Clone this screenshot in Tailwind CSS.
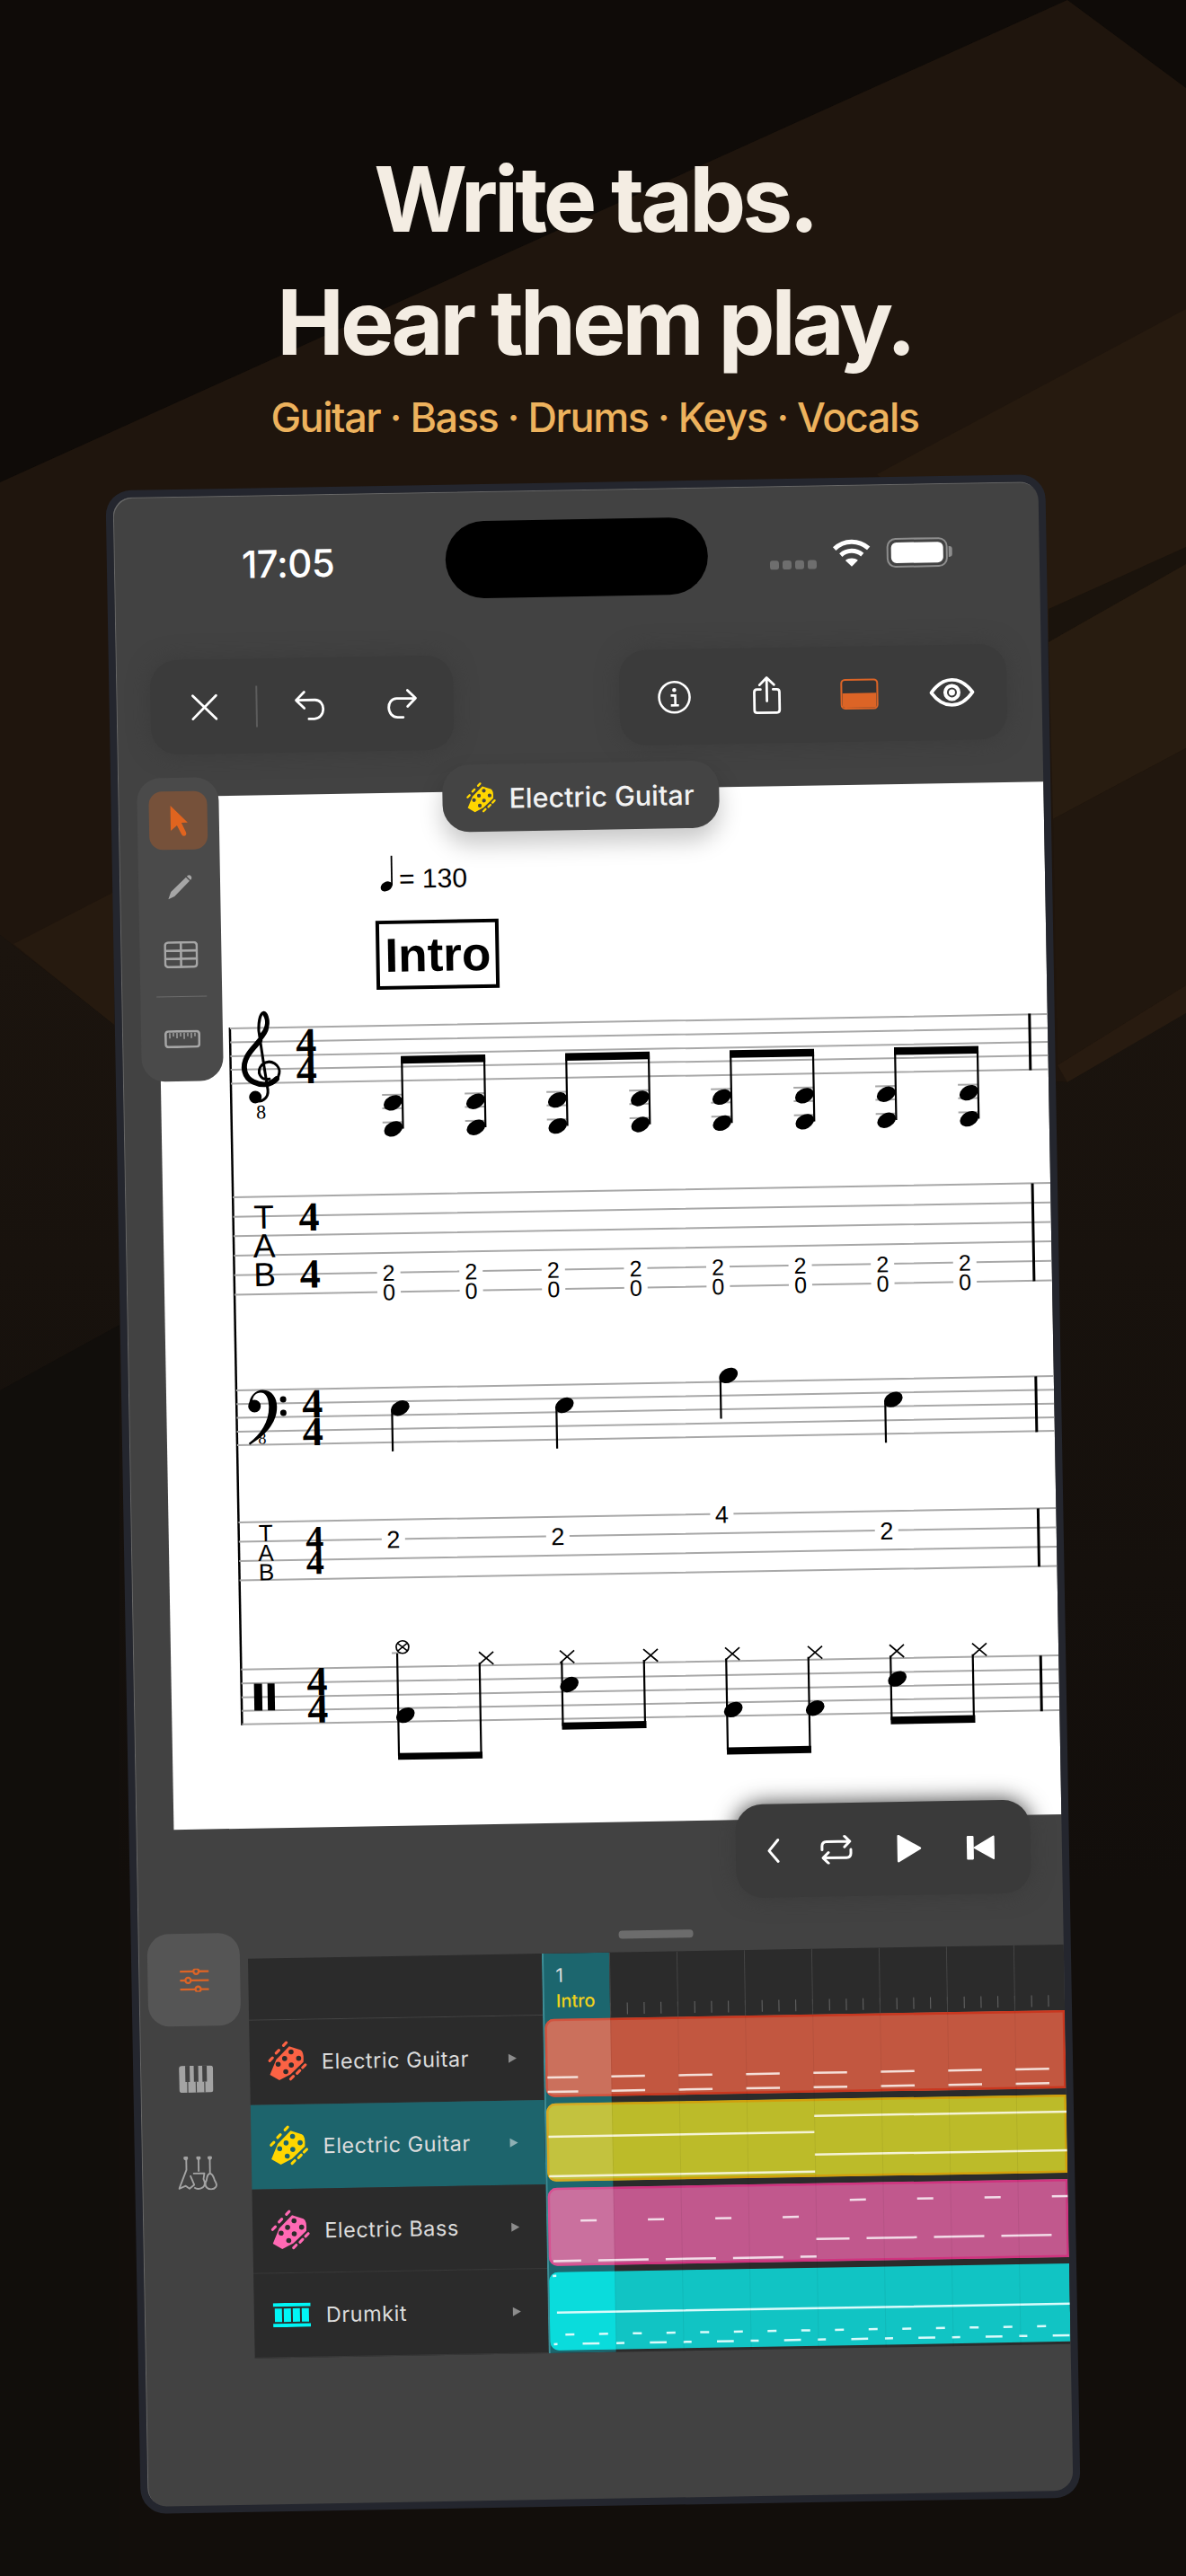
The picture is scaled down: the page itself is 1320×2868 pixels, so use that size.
<!DOCTYPE html>
<html lang="en">
<head>
<meta charset="UTF-8">
<title>Write tabs. Hear them play.</title>
<script src="https://cdn.jsdelivr.net/npm/@tailwindcss/browser@4"></script>
</head>
<body class="relative w-[1320px] h-[2868px] overflow-hidden bg-[#110e0b] [font-family:Inter,sans-serif]">

<!-- background shards -->
<svg class="absolute inset-0" width="1320" height="2868" viewBox="0 0 1320 2868">
  <defs>
    <linearGradient id="low" x1="0" y1="1050" x2="0" y2="2100" gradientUnits="userSpaceOnUse">
      <stop offset="0" stop-color="#1b140e"/>
      <stop offset="1" stop-color="#120e0b"/>
    </linearGradient>
  </defs>
  <path d="M0 0H1320V98L1188 0L0 537Z" fill="#0f0b08"/>
  <path d="M0 537L1188 0L1320 98V1130L1188 1205L127 1141L0 1041Z" fill="#1f150d"/>
  <path d="M1320 344L976 528L1170 715L1320 626Z" fill="#261a0f"/>
  <path d="M1167 678L1320 609V628L1167 715Z" fill="#1a130c"/>
  <path d="M1167 715L1320 628V833L1172 912Z" fill="#281c10"/>
  <path d="M1172 912L1320 833V1097L1177 1186Z" fill="#21170e"/>
  <path d="M1177 1186L1320 1097V1128L1188 1205Z" fill="#281b10"/>
  <path d="M15 1051L127 993V1141Z" fill="#261a0f"/>
  <path d="M0 1041L127 1141L1188 1205L1320 1128V2868H0Z" fill="url(#low)"/>
  <path d="M0 1548L133 1475V2868H0Z" fill="#110e0b"/>
</svg>

<!-- reusable icons -->
<svg class="hidden">
  <symbol id="headstock" viewBox="-24 -24 48 48">
    <path fill-rule="evenodd" fill="currentColor" d="M2-17L14-13Q18-11 17 0L3 13L-9 19L-19 13L-12-3ZM6.700-11a2.700 2.700 0 1 0-5.400 0a2.700 2.700 0 1 0 5.400 0ZM14.700-4a2.700 2.700 0 1 0-5.400 0a2.700 2.700 0 1 0 5.400 0ZM-.300-4a2.700 2.700 0 1 0-5.400 0a2.700 2.700 0 1 0 5.400 0ZM6.700 3a2.700 2.700 0 1 0-5.400 0a2.700 2.700 0 1 0 5.400 0ZM-7.300 2a2.700 2.700 0 1 0-5.400 0a2.700 2.700 0 1 0 5.400 0ZM.7 10a2.700 2.700 0 1 0-5.400 0a2.700 2.700 0 1 0 5.400 0Z"/>
    <path stroke="currentColor" stroke-width="3" stroke-linecap="round" d="M-19-2L-16-5M-12-10L-9-13M-4-18L-1-21M16 6L19 3M10 12L13 9M3 18L6 15"/>
  </symbol>
</svg>

<header class="relative pl-[4px] pt-[153px] text-center">
  <h1 class="text-[100px] leading-[137px] font-bold tracking-[-4px] text-[#f4ede3]">Write tabs.<br>Hear them play.</h1>
  <p class="mt-[8px] text-[45px] leading-[60px] font-medium tracking-[-1.450px] text-[#edb25d]">Guitar · Bass · Drums · Keys · Vocals</p>
</header>

<!-- device -->
<div class="relative mx-auto mt-[42px] w-[1046px] h-[2253px] -rotate-1 rounded-[28px] bg-[#24262e] p-2">
  <div class="relative h-full overflow-hidden rounded-[21px] bg-[#424242] shadow-[inset_1px_1px_0_#676767]">

    <!-- status bar -->
    <div class="mt-[33px] grid h-[86px] grid-cols-[369px_292px_1fr] items-center">
      <span class="pl-[142px] text-[42px] font-medium text-white tracking-[-0.5px]">17:05</span>
      <div class="h-[86px] rounded-[43px] bg-black"></div>
      <div class="flex items-center pl-[69px] gap-[17px]">
        <div class="mt-[24px] flex w-[52px] justify-between">
          <i class="h-[10px] w-[10px] rounded-[3px] bg-[#6e6e6e]"></i>
          <i class="h-[10px] w-[10px] rounded-[3px] bg-[#6e6e6e]"></i>
          <i class="h-[10px] w-[10px] rounded-[3px] bg-[#6e6e6e]"></i>
          <i class="h-[10px] w-[10px] rounded-[3px] bg-[#6e6e6e]"></i>
        </div>
        <svg width="44" height="32" viewBox="0 0 44 32" fill="none" stroke="#fff" stroke-width="5">
          <path d="M3 11C14 1 30 1 41 11"/>
          <path d="M10 18C17 12 27 12 34 18"/>
          <path d="M22 31L15 24C19 21 25 21 29 24Z" fill="#fff" stroke="none"/>
        </svg>
        <div class="flex items-center">
          <div class="h-[33px] w-[68px] rounded-[10px] border-2 border-[#8d8d8d] p-[3px]">
            <div class="h-full w-full rounded-[6px] bg-white"></div>
          </div>
          <div class="ml-[1px] h-[12px] w-[4px] rounded-r-[3px] bg-[#8d8d8d]"></div>
        </div>
      </div>
    </div>

    <!-- toolbars -->
    <div class="mt-[61px] flex h-[107px] justify-between pl-[38px] pr-[39px]">
      <div class="flex h-[105px] w-[337px] items-center self-end rounded-[30px] bg-[#3b3b3b] pl-[45px] shadow-[0_0_24px_#3b3b3b]">
        <svg width="30" height="30" viewBox="0 0 30 30" fill="none" stroke="#fff" stroke-width="2.800" stroke-linecap="round"><path d="M2 2L28 28M28 2L2 28"/></svg>
        <div class="ml-[42px] h-[46px] w-[2px] bg-[#5c5c5c]"></div>
        <svg class="ml-[40px]" width="36" height="36" viewBox="0 0 36 36" fill="none" stroke="#fff" stroke-width="2.800" stroke-linecap="round" stroke-linejoin="round"><path d="M12 3L3 12L12 21M3 12H24C30 12 33 17 33 22C33 28 29 33 23 33H17"/></svg>
        <svg class="ml-[67px]" width="36" height="36" viewBox="0 0 36 36" fill="none" stroke="#fff" stroke-width="2.800" stroke-linecap="round" stroke-linejoin="round"><path d="M24 3L33 12L24 21M33 12H12C6 12 3 17 3 22C3 28 7 33 13 33H19"/></svg>
      </div>
      <div class="flex h-[106px] w-[431px] items-center rounded-[30px] bg-[#3b3b3b] px-[10px] shadow-[0_0_24px_#3b3b3b]">
        <div class="flex w-[103px] justify-center">
          <svg width="38" height="38" viewBox="0 0 38 38" fill="none" stroke="#fff" stroke-width="2.600"><circle cx="19" cy="19" r="17"/><circle cx="19" cy="11" r="2.300" fill="#fff" stroke="none"/><path d="M15 17H20V28M15 28H24"/></svg>
        </div>
        <div class="flex w-[103px] justify-center">
          <svg width="34" height="44" viewBox="0 0 34 44" fill="none" stroke="#fff" stroke-width="2.800" stroke-linecap="round" stroke-linejoin="round"><path d="M10 15H6Q3 15 3 18V38Q3 41 6 41H28Q31 41 31 38V18Q31 15 28 15H24M17 28V3M9 10L17 2L25 10"/></svg>
        </div>
        <div class="flex w-[103px] justify-center">
          <div class="h-[34px] w-[42px] overflow-hidden rounded-[5px] border-2 border-[#dc6426] bg-[#333]">
            <div class="mt-[14px] h-[20px] bg-[#dc6426]"></div>
          </div>
        </div>
        <div class="flex w-[103px] justify-center">
          <svg width="50" height="32" viewBox="0 0 50 32" fill="none" stroke="#fff" stroke-width="3.800"><path d="M2 16C10 5 17 2 25 2C33 2 40 5 48 16C40 27 33 30 25 30C17 30 10 27 2 16Z"/><circle cx="25" cy="16" r="7.500" fill="none" stroke-width="4"/><circle cx="25" cy="16" r="3.500" fill="#fff" stroke="none"/></svg>
        </div>
      </div>
    </div>

    <!-- score page -->
    <div class="mt-[47px] ml-[42px] h-[1150px] bg-white">
      <svg class="block [font-family:'Liberation_Sans',sans-serif]" width="988" height="1150" viewBox="0 0 988 1150">
        <defs>
          <g id="pair">
            <path stroke="#a8a8a8" stroke-width="2" d="M246 336H268M246 351H268M246 366.700H268M338 336H360M338 351H360M338 366.700H360"/>
            <ellipse cx="258" cy="345" rx="11" ry="7.800" transform="rotate(-28 258 345)"/>
            <ellipse cx="258" cy="374" rx="11" ry="7.800" transform="rotate(-28 258 374)"/>
            <ellipse cx="350" cy="345" rx="11" ry="7.800" transform="rotate(-28 350 345)"/>
            <ellipse cx="350" cy="374" rx="11" ry="7.800" transform="rotate(-28 350 374)"/>
            <path stroke="#000" stroke-width="2.200" d="M268.700 294V374M360.500 294V374"/>
            <rect x="267.600" y="293" width="94" height="8.500"/>
          </g>
          <g id="tabpair">
            <rect x="237" y="522" width="26" height="46" fill="#fff"/>
            <text x="250" y="543" text-anchor="middle" font-size="25">2</text>
            <text x="250" y="564.500" text-anchor="middle" font-size="25">0</text>
          </g>
          <path id="xhead" d="M-8-7L8 7M8-7L-8 7" stroke="#000" stroke-width="1.700" fill="none"/>
        </defs>

        <!-- tempo + rehearsal mark -->
        <ellipse cx="255" cy="104" rx="7" ry="5" transform="rotate(-28 255 104)"/>
        <path stroke="#000" stroke-width="1.800" d="M261 103V70"/>
        <text x="269" y="106" font-size="30">= 130</text>
        <rect x="244" y="144" width="133" height="73" fill="none" stroke="#000" stroke-width="4"/>
        <text x="252" y="199" font-size="53" font-weight="700">Intro</text>

        <!-- staves -->
        <path stroke="#000" stroke-width="2.500" d="M78 258V1035"/>
        <path stroke="#a8a8a8" stroke-width="2" fill="none" d="M78 259H988M78 274.500H988M78 290H988M78 305H988M78 320.500H988
          M78 447H988M78 468.700H988M78 490.400H988M78 512H988M78 533.800H988M78 555.500H988
          M78 662H988M78 677.300H988M78 692.600H988M78 708H988M78 723H988
          M78 809H988M78 830.500H988M78 852H988M78 873.600H988
          M78 973H988M78 988.500H988M78 1004H988M78 1019H988M78 1034H988"/>
        <path stroke="#000" stroke-width="3" d="M968 258V321M968 447V556M968 662V724M968 809V874M968 973V1035"/>

        <!-- treble clef -->
        <g transform="translate(91 240)" fill="none" stroke="#000" stroke-linecap="round">
          <path stroke-width="3" d="M30 76C20 78 15 68 22 60C32 52 43 62 41 70C39 82 24 84 12 80C2 76 -2 62 6 50C12 40 24 32 28 22C31 12 29 3 25 2C21 3 19 12 19 22L24 60L28 88C29 98 20 103 14 99"/>
          <path stroke-width="6" d="M38 76C30 84 20 83 12 79C2 74 -1 62 6 50C10 43 16 38 20 33"/>
          <path stroke-width="4.500" d="M21 28C28 22 31 12 26 4"/>
          <circle cx="14" cy="96" r="7" fill="#000" stroke="none"/>
          <text x="20" y="120" font-size="22" text-anchor="middle" fill="#000" stroke="none" class="[font-family:'Liberation_Serif',serif]">8</text>
        </g>

        <!-- bass clef -->
        <g transform="translate(90 662)">
          <path d="M2 18C2 6 10 0 17 0C28 0 33 9 33 19C33 38 18 52 2 61L1 59C14 50 24 36 24 19C24 9 21 3 15 3C10 3 6 7 6 12Z"/>
          <circle cx="8" cy="18" r="7"/>
          <circle cx="40" cy="11" r="3.500"/>
          <circle cx="40" cy="26" r="3.500"/>
          <text x="16" y="60" font-size="18" text-anchor="middle" class="[font-family:'Liberation_Serif',serif]">8</text>
        </g>

        <!-- percussion clef -->
        <path d="M92 989H101V1019H92ZM107 989H115V1019H107Z"/>

        <!-- time signatures -->
        <g class="[font-family:'Liberation_Serif',serif]" font-weight="700" text-anchor="middle">
          <text x="162.500" y="291.500" font-size="46">4</text>
          <text x="162.500" y="321.500" font-size="46">4</text>
          <text x="162.500" y="485.500" font-size="46">4</text>
          <text x="162.500" y="549" font-size="46">4</text>
          <text x="162.500" y="693.500" font-size="46">4</text>
          <text x="162.500" y="724.500" font-size="46">4</text>
          <text x="162.500" y="842" font-size="40">4</text>
          <text x="162.500" y="868" font-size="40">4</text>
          <text x="162.500" y="1003" font-size="46">4</text>
          <text x="162.500" y="1033.500" font-size="46">4</text>
        </g>

        <!-- TAB clefs -->
        <g text-anchor="middle">
          <text x="112" y="482.500" font-size="37">T</text>
          <text x="112" y="514.500" font-size="37">A</text>
          <text x="112" y="546.500" font-size="37">B</text>
          <text x="108" y="830.600" font-size="26">T</text>
          <text x="108" y="852.600" font-size="26">A</text>
          <text x="108" y="874" font-size="26">B</text>
        </g>

        <!-- guitar notes + fret numbers -->
        <use href="#pair"/><use href="#pair" x="183"/><use href="#pair" x="366"/><use href="#pair" x="549"/>
        <use href="#tabpair"/><use href="#tabpair" x="91.600"/><use href="#tabpair" x="183.200"/><use href="#tabpair" x="274.800"/>
        <use href="#tabpair" x="366.400"/><use href="#tabpair" x="458"/><use href="#tabpair" x="549.600"/><use href="#tabpair" x="641.200"/>

        <!-- bass notes -->
        <ellipse cx="260" cy="685" rx="11" ry="7.800" transform="rotate(-28 260 685)"/>
        <ellipse cx="443" cy="685" rx="11" ry="7.800" transform="rotate(-28 443 685)"/>
        <ellipse cx="626" cy="655" rx="11" ry="7.800" transform="rotate(-28 626 655)"/>
        <ellipse cx="809" cy="685" rx="11" ry="7.800" transform="rotate(-28 809 685)"/>
        <path stroke="#000" stroke-width="2.200" d="M251 688V733M434 688V733M617 658V703M800 688V733"/>
        <g text-anchor="middle" font-size="27">
          <rect x="237" y="818" width="26" height="26" fill="#fff"/><text x="250" y="840.500">2</text>
          <rect x="420" y="818" width="26" height="26" fill="#fff"/><text x="433" y="840.500">2</text>
          <rect x="603" y="796" width="26" height="26" fill="#fff"/><text x="616" y="819">4</text>
          <rect x="786" y="818" width="26" height="26" fill="#fff"/><text x="799" y="840.500">2</text>
        </g>

        <!-- drum notes -->
        <path stroke="#a8a8a8" stroke-width="2" d="M246 957.500H256"/>
        <circle cx="258" cy="951" r="7" fill="none" stroke="#000" stroke-width="1.700"/>
        <path d="M253 947L263 955M263 947L253 955" stroke="#000" stroke-width="1.500"/>
        <use href="#xhead" x="351" y="965"/>
        <use href="#xhead" x="441" y="965"/><use href="#xhead" x="534" y="965"/>
        <use href="#xhead" x="625" y="965"/><use href="#xhead" x="717" y="965"/>
        <use href="#xhead" x="808" y="965"/><use href="#xhead" x="900" y="965"/>
        <ellipse cx="260" cy="1027" rx="11" ry="7.800" transform="rotate(-28 260 1027)"/>
        <ellipse cx="443" cy="996" rx="11" ry="7.800" transform="rotate(-28 443 996)"/>
        <ellipse cx="625" cy="1027" rx="11" ry="7.800" transform="rotate(-28 625 1027)"/>
        <ellipse cx="716" cy="1027" rx="11" ry="7.800" transform="rotate(-28 716 1027)"/>
        <ellipse cx="808" cy="996" rx="11" ry="7.800" transform="rotate(-28 808 996)"/>
        <path stroke="#000" stroke-width="2.200" d="M252 958V1072M343.500 970V1072M435 970V1042M526.500 970V1042M618 970V1072M709.500 970V1072M801 970V1042M892.500 970V1042"/>
        <rect x="251" y="1069" width="94" height="7.500"/>
        <rect x="434" y="1038" width="94" height="8"/>
        <rect x="617" y="1069" width="94" height="8"/>
        <rect x="800" y="1038" width="94" height="8.500"/>
      </svg>
    </div>

    <!-- bottom panel -->
    <div class="flex">
      <div class="ml-[10px] w-[103px] pt-[116px]">
        <div class="flex h-[103px] items-center justify-center rounded-[24px] bg-[#555]">
          <svg width="34" height="26" viewBox="0 0 34 26" fill="none" stroke="#dc6426" stroke-width="2.300">
            <path d="M1 3H16M22 3H33M1 13H7M13 13H33M1 23H18M24 23H33"/>
            <circle cx="19" cy="3" r="3"/><circle cx="10" cy="13" r="3"/><circle cx="21" cy="23" r="3"/>
          </svg>
        </div>
        <div class="mt-[44px] flex justify-center">
          <svg width="38" height="30" viewBox="0 0 38 30">
            <rect width="38" height="30" rx="3.500" fill="#a3a3a3"/>
            <path fill="#424242" d="M7 0H12V18H7ZM16.500 0H21.500V18H16.500ZM26 0H31V18H26Z"/>
            <path stroke="#424242" stroke-width="1.200" d="M9.500 18V30M19 18V30M28.500 18V30"/>
          </svg>
        </div>
        <div class="mt-[71px] flex justify-center">
          <svg width="44" height="38" viewBox="0 0 42 36" fill="none" stroke="#a3a3a3" stroke-width="1.800" stroke-linejoin="round">
            <path d="M9 0V14L1 34L8 31L12 34L17 30L13 20M22 0V16M34 0V18"/>
            <path d="M16 18H28L27 24Q30 30 26 33Q21 36 17 33M34 18C29 20 32 24 29 28C28 33 32 35 35 35C39 35 42 32 40 28C37 24 39 20 34 18Z"/>
            <circle cx="8.500" cy="1.500" r="1.500" fill="#a3a3a3"/><circle cx="22" cy="1.500" r="1.500" fill="#a3a3a3"/><circle cx="34" cy="1.500" r="1.500" fill="#a3a3a3"/>
          </svg>
        </div>
      </div>

      <div class="ml-[9px] flex-1">
        <div class="mx-auto mt-[121px] h-[9px] w-[83px] rounded-[4px] bg-[#6c6c6c]"></div>
        <div class="mt-[15px] flex">

          <!-- track list -->
          <div class="w-[327px] text-[23.500px] tracking-[0.5px] text-[#dcdcdc]">
            <div class="h-[69px] border-b border-[#454545] bg-[#2b2b2b]"></div>
            <div class="flex h-[94px] items-center bg-[#2b2b2b] pl-[17px]">
              <svg class="text-[#fb6244]" width="50" height="50"><use href="#headstock"/></svg>
              <span class="ml-[13px] flex-1">Electric Guitar</span>
              <span class="mr-[30px] h-0 w-0 border-y-[5px] border-l-[9px] border-y-transparent border-l-[#8c8c8c]"></span>
            </div>
            <div class="flex h-[94px] items-center bg-[#1d646c] pl-[17px]">
              <svg class="text-[#ffd600]" width="50" height="50"><use href="#headstock"/></svg>
              <span class="ml-[13px] flex-1">Electric Guitar</span>
              <span class="mr-[30px] h-0 w-0 border-y-[5px] border-l-[9px] border-y-transparent border-l-[#8fb0b4]"></span>
            </div>
            <div class="flex h-[94px] items-center border-b border-[#3a3a3a] bg-[#2b2b2b] pl-[17px]">
              <svg class="text-[#ff69b4]" width="50" height="50"><use href="#headstock"/></svg>
              <span class="ml-[13px] flex-1">Electric Bass</span>
              <span class="mr-[30px] h-0 w-0 border-y-[5px] border-l-[9px] border-y-transparent border-l-[#8c8c8c]"></span>
            </div>
            <div class="flex h-[94px] items-center border-b border-[#3a3a3a] bg-[#2b2b2b] pl-[21px]">
              <svg width="42" height="27" viewBox="0 0 42 27" fill="#00f6f6">
                <path d="M0 0H42V4H0ZM0 23H42V27H0ZM2 6H10V21H2ZM12 6H20V21H12ZM22 6H30V21H22ZM32 6H40V21H32Z"/>
              </svg>
              <span class="ml-[17px] flex-1">Drumkit</span>
              <span class="mr-[30px] h-0 w-0 border-y-[5px] border-l-[9px] border-y-transparent border-l-[#8c8c8c]"></span>
            </div>
          </div>

          <!-- timeline -->
          <div class="relative flex-1 overflow-hidden bg-[#2b2b2b]">
            <div class="absolute inset-y-0 left-0 w-[75px] border-l-2 border-[#3e8e96] bg-[#1c666e] pl-[13px] pt-[12px]">
              <p class="text-[21px] leading-[26px] text-[#dcdcdc]">1</p>
              <p class="mt-[2px] text-[20px] leading-[26px] font-medium text-[#f0d21c]">Intro</p>
            </div>
            <svg class="absolute inset-0" width="581" height="447" fill="none">
              <path stroke="#686868" stroke-width="13" stroke-dasharray="1 17.750" d="M75 62.500H581"/>
              <path stroke="#4a4a4a" stroke-width="73" stroke-dasharray="1 74" d="M75 36.500H581"/>
            </svg>
            <div class="relative flex flex-col gap-[7px] pl-[2px] pt-[73px]">

              <div class="relative h-[87px] overflow-hidden rounded-l-[10px] bg-[#c25740] shadow-[inset_0_0_0_2.500px_#c9371f]">
                <div class="absolute inset-y-0 left-0 w-[73px] bg-white/15"></div>
                <svg class="absolute inset-0" width="580" height="87" fill="none" stroke="#f5dfd8" stroke-width="2.500">
                  <path d="M2 65H36M2 81H36"/>
                  <path stroke-dasharray="37.500 37.500" d="M73 65H580M73 81H580"/>
                </svg>
              </div>

              <div class="relative h-[87px] overflow-hidden rounded-l-[10px] bg-[#bcbb29] shadow-[inset_0_0_0_2.500px_#d29f0c]">
                <div class="absolute inset-y-0 left-0 w-[73px] bg-white/10"></div>
                <svg class="absolute inset-0" width="580" height="87" fill="none" stroke="#f5f3d4" stroke-width="2.500">
                  <path d="M2 37H298M2 81H298M298 19H580M298 62H580"/>
                </svg>
              </div>

              <div class="relative h-[87px] overflow-hidden rounded-l-[10px] bg-[#c1588d] shadow-[inset_0_0_0_2.500px_#d0337f]">
                <div class="absolute inset-y-0 left-0 w-[73px] bg-white/15"></div>
                <svg class="absolute inset-0" width="580" height="87" fill="none" stroke="#f3dce8" stroke-width="2.500">
                  <path d="M36 37H54M111 37H129M186 37H204M261 37H279M336 19H354M411 19H429M486 19H504M561 19H579"/>
                  <path d="M5 81.500H36M55 81.500H111M130 81.500H186M205 81.500H261M280 81.500H298M298 62H335M354 62H410M429 62H485M504 62H560"/>
                </svg>
              </div>

              <div class="relative h-[87px] overflow-hidden rounded-l-[10px] bg-[#11c4c4]">
                <div class="absolute inset-y-0 left-0 w-[73px] bg-[#0adcdc]"></div>
                <svg class="absolute inset-0" width="580" height="87" fill="none" stroke="#d9fbfb" stroke-width="2.500">
                  <path d="M4 4H8M4 80H8M8 45H580"/>
                  <path stroke-dasharray="10 27.500" d="M17 69.500H580"/>
                  <path stroke-dasharray="18.750 18.750 9 28.250" d="M36 80H580"/>
                </svg>
              </div>
            </div>
            <svg class="absolute inset-0" width="581" height="447" fill="none">
              <path stroke="#000" stroke-opacity="0.060" stroke-width="447" stroke-dasharray="1 74" d="M75 223.500H581"/>
            </svg>
          </div>
        </div>
      </div>
    </div>

    <!-- floating overlays -->
    <div class="absolute left-[21px] top-[313px] flex h-[338px] w-[91px] flex-col items-center rounded-[26px] bg-[#4a4a4a] pt-[15px]">
      <div class="flex h-[65px] w-[65px] items-center justify-center rounded-[15px] bg-[#76513a]">
        <svg width="22" height="36" viewBox="0 0 22 36" fill="#e0641f"><path d="M2 1L21 20H14L19 31Q20 34 17 35Q15 35 14 33L9 23L2 29Z"/></svg>
      </div>
      <div class="mt-[4px] flex h-[75px] items-center justify-center">
        <svg width="28" height="28" viewBox="0 0 28 28" fill="#a6a6a6"><path d="M1 27L4 19L21 3L25 7L8 24ZM23 1Q25 0 26.500 1.500Q28 3 27 5L26 6L22 2Z"/></svg>
      </div>
      <div class="flex h-[75px] items-center justify-center">
        <svg width="38" height="30" viewBox="0 0 38 30" fill="none" stroke="#a6a6a6" stroke-width="2.600"><rect x="1.300" y="1.300" width="35.400" height="27.400" rx="3.500"/><path d="M1 10.500H37M1 19.500H37M19 1V29"/></svg>
      </div>
      <div class="mt-[9px] h-px w-[56px] bg-[#6b6b6b]"></div>
      <div class="mt-[23px] flex h-[48px] items-center justify-center">
        <svg width="40" height="20" viewBox="0 0 40 20" fill="none" stroke="#a6a6a6"><rect x="1.300" y="1.300" width="37.400" height="17.400" rx="3" stroke-width="2.600"/><path stroke-width="1.400" d="M6 3V9M10 3V7M14 3V9M18 3V7M22 3V10M26 3V7M30 3V9M34 3V7"/></svg>
      </div>
    </div>

    <div class="absolute left-[361px] top-[304px] flex h-[75px] w-[308px] items-center rounded-[30px] bg-[#444] pl-[24px] text-[30.500px] font-medium text-[#f2f2f2] shadow-[0_14px_26px_rgba(0,0,0,0.22)]">
      <svg class="text-[#ffd600]" width="38" height="38"><use href="#headstock"/></svg>
      <span class="ml-[12px]">Electric Guitar</span>
    </div>

    <div class="absolute left-[667px] top-[1467px] flex h-[104px] w-[328px] items-center rounded-[30px] bg-[#3a3a3a] pl-[34px] shadow-[0_0_24px_#3a3a3a]">
      <svg width="16" height="30" viewBox="0 0 16 30" fill="none" stroke="#fff" stroke-width="3" stroke-linecap="round" stroke-linejoin="round"><path d="M13 3L3 15L13 27"/></svg>
      <svg class="ml-[44px]" width="36" height="32" viewBox="0 0 36 32" fill="none" stroke="#fff" stroke-width="3" stroke-linecap="round" stroke-linejoin="round"><path d="M2 16V12Q2 7 7 7H33M27 1L33 7L27 13M34 16V20Q34 25 29 25H3M9 19L3 25L9 31"/></svg>
      <svg class="ml-[49px]" width="28" height="32" viewBox="0 0 28 32" fill="#fff" stroke="#fff" stroke-width="2.500" stroke-linejoin="round"><path d="M2 2L26 16L2 30Z"/></svg>
      <svg class="ml-[49px]" width="33" height="29" viewBox="0 0 30 26" fill="#fff" stroke="#fff" stroke-width="2" stroke-linejoin="round"><path d="M2 2H7V24H2ZM28 2L9 13L28 24Z"/></svg>
    </div>

  </div>
</div>
</body>
</html>
